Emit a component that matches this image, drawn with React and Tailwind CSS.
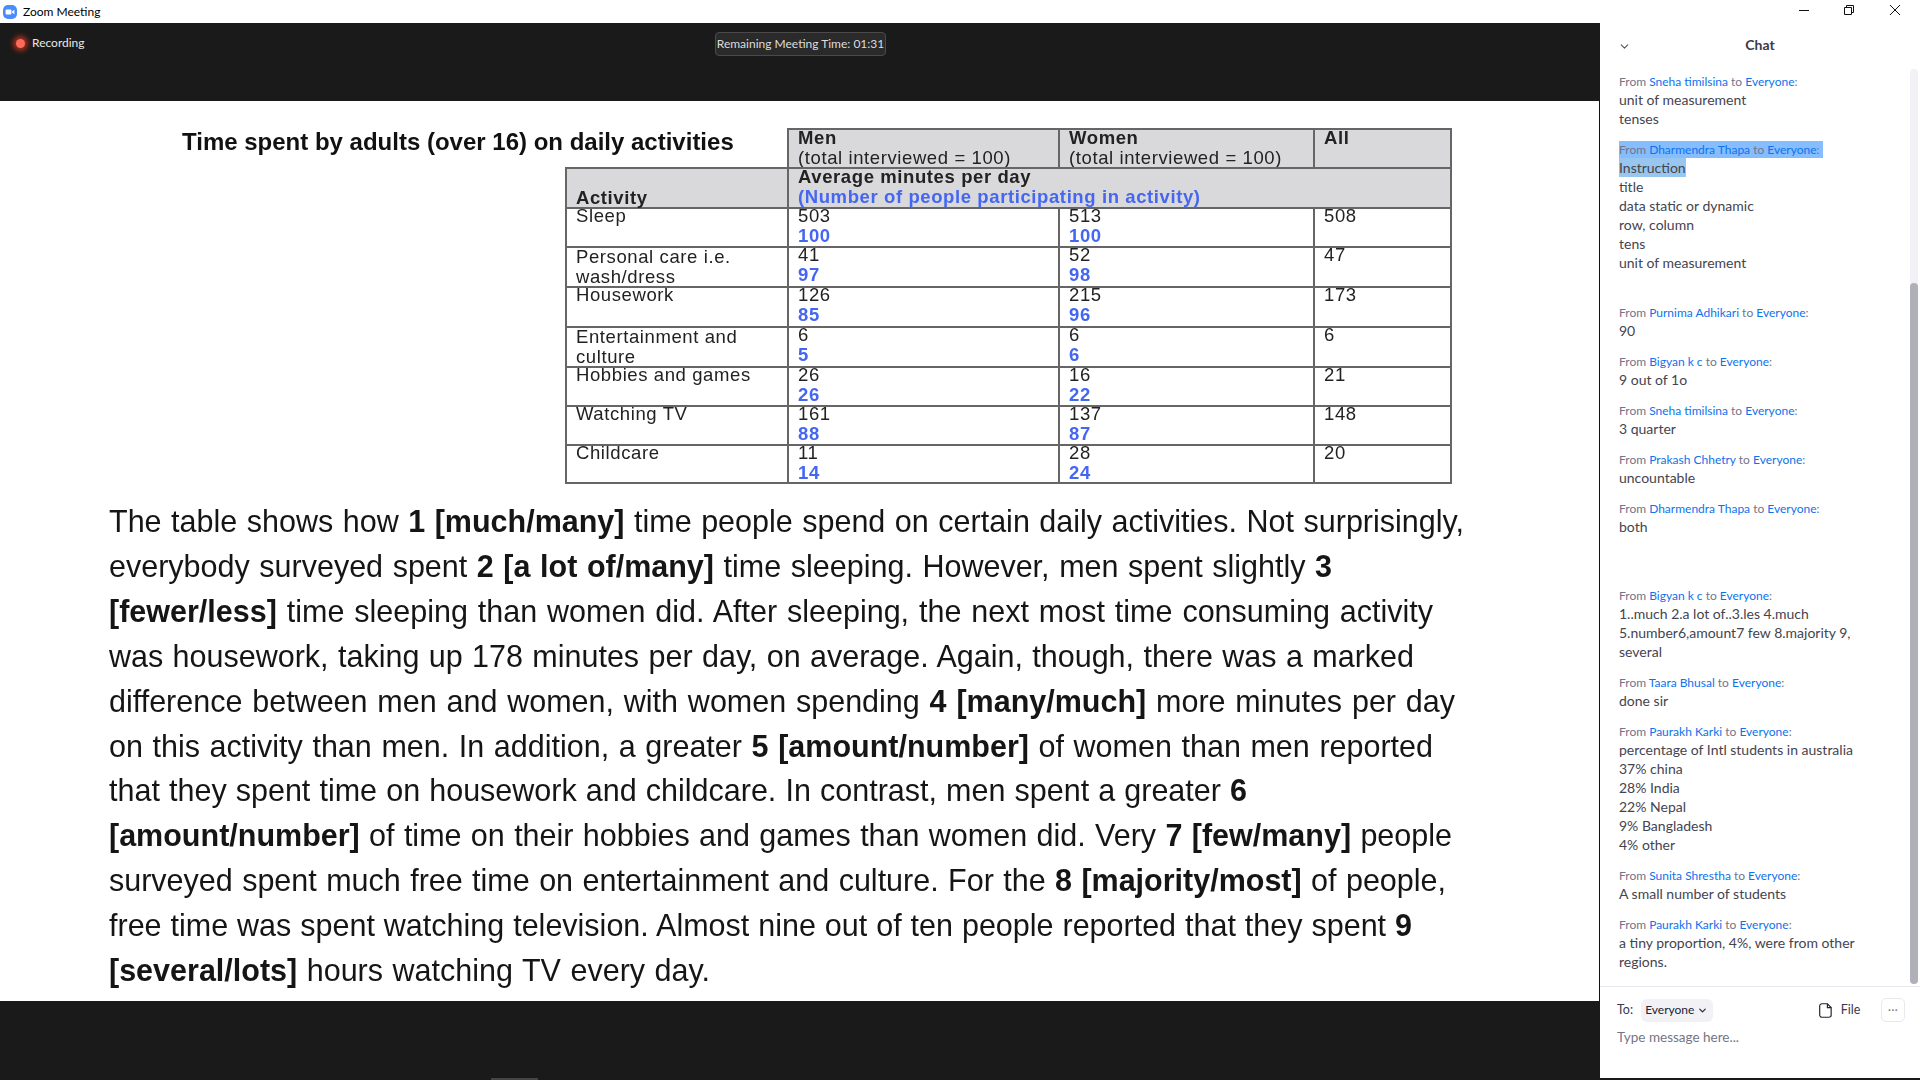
import React from 'react';
import { ChevronDown } from 'lucide-react';

const rows = [
  { h: 'h-[39px]', a: ['Sleep'], m: ['503', '100'], w: ['513', '100'], all: '508' },
  { h: 'h-[40px]', a: ['Personal care i.e.', 'wash/dress'], pad: true, m: ['41', '97'], w: ['52', '98'], all: '47' },
  { h: 'h-[40px]', a: ['Housework'], m: ['126', '85'], w: ['215', '96'], all: '173' },
  { h: 'h-[40px]', a: ['Entertainment and', 'culture'], pad: true, m: ['6', '5'], w: ['6', '6'], all: '6' },
  { h: 'h-[39px]', a: ['Hobbies and games'], m: ['26', '26'], w: ['16', '22'], all: '21' },
  { h: 'h-[39px]', a: ['Watching TV'], m: ['161', '88'], w: ['137', '87'], all: '148' },
  { h: 'h-[38px]', a: ['Childcare'], m: ['11', '14'], w: ['28', '24'], all: '20' },
];

const Num = ({ v }) => (
  <div className="-mt-[3px] pl-[9px] leading-[20px]">
    <div>{v[0]}</div>
    <div className="font-bold text-[#4566f0]">{v[1]}</div>
  </div>
);

const paragraph = [
  { w: 'w-[1355px]', c: <>The table shows how <b>1 [much/many]</b> time people spend on certain daily activities. Not surprisingly,</> },
  { w: 'w-[1223px]', c: <>everybody surveyed spent <b>2 [a lot of/many]</b> time sleeping. However, men spent slightly <b>3</b></> },
  { w: 'w-[1324px]', c: <><b>[fewer/less]</b> time sleeping than women did. After sleeping, the next most time consuming activity</> },
  { w: 'w-[1305px]', c: <>was housework, taking up 178 minutes per day, on average. Again, though, there was a marked</> },
  { w: 'w-[1346px]', c: <>difference between men and women, with women spending <b>4 [many/much]</b> more minutes per day</> },
  { w: 'w-[1324px]', c: <>on this activity than men. In addition, a greater <b>5 [amount/number]</b> of women than men reported</> },
  { w: 'w-[1138px]', c: <>that they spent time on housework and childcare. In contrast, men spent a greater <b>6</b></> },
  { w: 'w-[1343px]', c: <><b>[amount/number]</b> of time on their hobbies and games than women did. Very <b>7 [few/many]</b> people</> },
  { w: 'w-[1337px]', c: <>surveyed spent much free time on entertainment and culture. For the <b>8 [majority/most]</b> of people,</> },
  { w: 'w-[1303px]', c: <>free time was spent watching television. Almost nine out of ten people reported that they spent <b>9</b></> },
  { w: 'w-[601px]', c: <><b>[several/lots]</b> hours watching TV every day.</> },
];

const messages = [
  ['Sneha timilsina', ['unit of measurement', 'tenses']],
  ['Dharmendra Thapa', ['Instruction', 'title', 'data static or dynamic', 'row, column', 'tens', 'unit of measurement', ''], true],
  ['Purnima Adhikari', ['90']],
  ['Bigyan k c', ['9 out of 1o']],
  ['Sneha timilsina', ['3 quarter']],
  ['Prakash Chhetry', ['uncountable']],
  ['Dharmendra Thapa', ['both', '', '']],
  ['Bigyan k c', ['1..much 2.a lot of..3.les 4.much', '5.number6,amount7 few 8.majority 9,', 'several']],
  ['Taara Bhusal', ['done sir']],
  ['Paurakh Karki', ['percentage of Intl students in australia', '37% china', '28% India', '22% Nepal', '9% Bangladesh', '4% other']],
  ['Sunita Shrestha', ['A small number of students']],
  ['Paurakh Karki', ['a tiny proportion, 4%, were from other', 'regions.']],
];

const Message = ({ name, lines, selected }) => (
  <div>
    <div className="h-[18px] text-[12px] leading-[18px] text-[#747487]">
      <span className={selected ? 'inline-block h-[17px] bg-[#86bdff] pr-[3px]' : ''}>
        From <span className="text-[#0e72ed]">{name}</span> to <span className="text-[#0e72ed]">Everyone</span>:
      </span>
    </div>
    {lines.map((l, i) => (
      <div key={i} className="h-[19px] text-[14px] leading-[17px] text-[#44444f]">
        {selected && i === 0 ? <span className="relative -top-[1px] block h-[19px] w-fit bg-[#98c6ee] leading-[19px]">{l}</span> : l}
      </div>
    ))}
  </div>
);

export default function App() {
  return (
    <div className="flex h-[1080px] w-[1920px] flex-col overflow-hidden bg-[#1a1a1a] font-['Lato',sans-serif]">
      {/* title bar */}
      <div className="flex h-[23px] items-center justify-between bg-white">
        <div className="flex items-center pl-[3px]">
          <svg width="14" height="14" viewBox="0 0 14 14">
            <rect width="14" height="14" rx="5" fill="#4a8cff" />
            <rect x="2.6" y="4.4" width="5.8" height="5.2" rx="1" fill="#fff" />
            <path d="M9 6.4 11.4 4.8V9.2L9 7.6Z" fill="#fff" />
          </svg>
          <span className="ml-[6px] text-[12px] leading-[16px] text-black">Zoom Meeting</span>
        </div>
        <div className="flex items-center">
          <svg width="130" height="23" viewBox="0 0 130 23" fill="none" stroke="#111" strokeWidth="1">
            <path d="M9 10.5H19" />
            <path d="M54.5 7.5H61.5V14.5H54.5Z" />
            <path d="M56.5 7V5.5H63.5V12.5H62" />
            <path d="M100 5 110 15M110 5 100 15" />
          </svg>
        </div>
      </div>

      <div className="flex flex-1">
        {/* meeting area */}
        <div className="relative flex w-[1600px] flex-col">
          <div className="flex h-[78px] items-start justify-between">
            <div className="flex items-center pl-[16px] pt-[12px]">
              <span className="h-[9px] w-[9px] rounded-full bg-[#ff6a5a] shadow-[0_0_5px_3px_rgba(225,60,30,0.7)]" />
              <span className="ml-[7px] text-[12px] leading-[16px] text-[#e8e8e8]">Recording</span>
            </div>
            <div className="absolute left-[715px] top-[9px] flex h-[24px] w-[171px] items-center justify-center whitespace-nowrap rounded-[4px] border border-[#4a4a4a] bg-[#2a2a2a] text-[12px] text-[#dcdcdc]">
              Remaining Meeting Time: 01:31
            </div>
          </div>

          {/* slide */}
          <div className="flex h-[900px] flex-col border-r border-r-[#111] bg-white pt-[27px] font-['Liberation_Sans',sans-serif] text-[18.5px] tracking-[0.6px] text-[#222] blur-[0.35px]">
            <div className="flex h-[41px]">
              <div className="w-[787px] whitespace-nowrap pl-[182px] pt-[1px] text-[24px] font-bold leading-[26px] tracking-normal text-[#111]">
                Time spent by adults (over 16) on daily activities
              </div>
              <div className="flex border-y-2 border-r-2 border-[#666] bg-[#d9d9dc]">
                <div className="h-[37px] w-[271px] border-l-2 border-[#666]">
                  <div className="-mt-[2px] pl-[9px] leading-[20px]"><b>Men</b><br />(total interviewed = 100)</div>
                </div>
                <div className="h-[37px] w-[255px] border-l-2 border-[#666]">
                  <div className="-mt-[2px] pl-[9px] leading-[20px]"><b>Women</b><br />(total interviewed = 100)</div>
                </div>
                <div className="h-[37px] w-[137px] border-l-2 border-[#666]">
                  <div className="-mt-[2px] pl-[9px] leading-[20px]"><b>All</b></div>
                </div>
              </div>
            </div>

            <div className="-mt-[2px] ml-[565px] w-[887px] border-x-2 border-y-2 border-[#666]">
              <div className="flex h-[38px] bg-[#d9d9dc]">
                <div className="w-[220px] pl-[9px] pt-[19px] font-bold leading-[20px]">Activity</div>
                <div className="flex-1 border-l-2 border-[#666]">
                  <div className="-mt-[2px] pl-[9px] font-bold leading-[20px]">
                    <div>Average minutes per day</div>
                    <div className="text-[#4566f0]">(Number of people participating in activity)</div>
                  </div>
                </div>
              </div>
              {rows.map((r) => (
                <div key={r.a[0]} className={`flex ${r.h} border-t-2 border-[#666]`}>
                  <div className={`w-[220px] whitespace-nowrap pl-[9px] leading-[20px] ${r.pad ? '-mt-[1px]' : '-mt-[3px]'}`}>
                    {r.a.map((t) => <div key={t}>{t}</div>)}
                  </div>
                  <div className="w-[271px] border-l-2 border-[#666]"><Num v={r.m} /></div>
                  <div className="w-[255px] border-l-2 border-[#666]"><Num v={r.w} /></div>
                  <div className="flex-1 border-l-2 border-[#666]">
                    <div className="-mt-[3px] pl-[9px] leading-[20px]">{r.all}</div>
                  </div>
                </div>
              ))}
            </div>

            <div className="mt-[15px] pl-[109px] text-[30.5px] leading-[44.9px] tracking-normal text-[#151515]">
              {paragraph.map((l, i) => (
                <div key={i} className={`${l.w} whitespace-nowrap [text-align-last:justify]`}>{l.c}</div>
              ))}
            </div>
          </div>

          <div className="absolute bottom-0 left-[491px] h-[2px] w-[47px] bg-[#444]" />
        </div>

        {/* chat */}
        <div className="flex h-[1055px] w-[320px] flex-col bg-white">
          <div className="relative flex h-[50px] flex-none items-start justify-center pt-[12px]">
            <ChevronDown className="absolute left-[18px] top-[17px] h-[13px] w-[13px] text-[#555]" strokeWidth={2} />
            <span className="text-[14px] font-bold leading-[20px] text-[#39394d]">Chat</span>
          </div>
          <div className="relative flex h-[914px] flex-none flex-col gap-[12px] border-b border-[#e8e8ee] pl-[19px]">
            {messages.map((m, i) => (
              <Message key={i} name={m[0]} lines={m[1]} selected={m[2]} />
            ))}
            <div className="absolute right-[2px] top-[-4px] h-[915px] w-[8px] rounded-[4px] bg-[#f1f1f6]">
              <div className="absolute bottom-0 left-0 h-[701px] w-[8px] rounded-[4px] bg-[#b0b0b9]" />
            </div>
          </div>
          <div className="flex flex-none items-center pl-[17px] pr-[15px] pt-[11px]">
            <span className="w-[24px] text-[12.5px] text-[#39394d]">To:</span>
            <div className="flex h-[23px] w-[73px] items-center justify-center gap-[3px] rounded-[6px] bg-[#f1f1f6] text-[12px] text-[#232333]">
              Everyone
              <ChevronDown className="h-[11px] w-[11px]" strokeWidth={2.5} />
            </div>
            <svg className="ml-[106px]" width="13" height="15" viewBox="0 0 13 15" fill="none" stroke="#232333" strokeWidth="1.2">
              <path d="M3 .7H8.5L12.3 4.5V12A2.3 2.3 0 0 1 10 14.3H3A2.3 2.3 0 0 1 .7 12V3A2.3 2.3 0 0 1 3 .7Z" />
              <path d="M8.5 .7V4.5H12.3" />
            </svg>
            <span className="ml-[9px] text-[12.5px] text-[#39394d]">File</span>
            <div className="ml-[21px] flex h-[24px] w-[24px] items-center justify-center rounded-[5px] border border-[#e8e8ee] text-[11px] leading-[10px] tracking-[0.5px] text-[#6e7680]">
              ···
            </div>
          </div>
          <div className="pl-[17px] pt-[5px] text-[13.5px] leading-[20px] text-[#747487]">Type message here...</div>
        </div>
      </div>
    </div>
  );
}
